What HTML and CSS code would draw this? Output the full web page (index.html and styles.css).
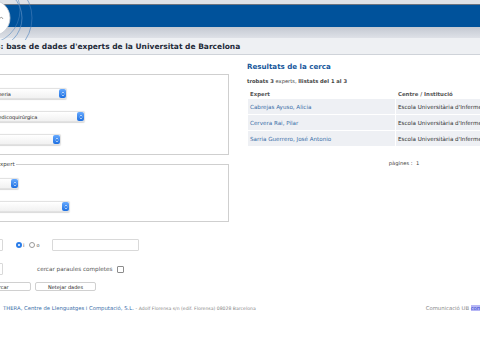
FILE: index.html
```html
<!DOCTYPE html>
<html lang="ca">
<head>
    <meta charset="UTF-8">
    <title>Experts UB</title>
    <link rel="stylesheet" href="styles.css">
</head>
<body>

<!-- capçalera -->
<div class="header">
    <div class="header-top"></div>
    <div class="header-blue"></div>
    <div class="header-band"></div>
    <svg class="logo" width="60" height="40" viewBox="0 0 60 40">
        <circle cx="-8" cy="18" r="30" fill="none" stroke="#5d8fc4" stroke-width="0.7"/>
        <circle cx="-8" cy="18" r="40" fill="none" stroke="#4a80ba" stroke-width="0.6"/>
        <circle cx="-14" cy="10" r="34" fill="none" stroke="#4c82bb" stroke-width="0.5"/>
        <circle cx="-8" cy="18" r="18" fill="#fff" stroke="#c3c8d0" stroke-width="0.8"/>
        <path d="M0 18 q2 -2 3 1" fill="none" stroke="#777" stroke-width="0.7"/>
    </svg>
</div>

<div class="page">
    <div class="titlebar">
        <h1>Experts UB: base de dades d'experts de la Universitat de Barcelona</h1>
    </div>

    <div class="main">
        <!-- formulari de cerca -->
        <div class="search">
            <fieldset class="box">
                <div class="field-row">
                    <label>Àmbit</label>
                    <span class="select sel-a"><span class="val">Infermeria</span><span class="arr"><svg width="4" height="6" viewBox="0 0 4 6"><path d="M0.8 2.3 L2 1 L3.2 2.3 M0.8 3.7 L2 5 L3.2 3.7" fill="none" stroke="#fff" stroke-width="0.6"/></svg></span></span>
                </div>
                <div class="field-row">
                    <label>Departament</label>
                    <span class="select sel-b"><span class="val">Inf. Medicoquirúrgica</span><span class="arr"><svg width="4" height="6" viewBox="0 0 4 6"><path d="M0.8 2.3 L2 1 L3.2 2.3 M0.8 3.7 L2 5 L3.2 3.7" fill="none" stroke="#fff" stroke-width="0.6"/></svg></span></span>
                </div>
                <div class="field-row">
                    <label>Especialitat</label>
                    <span class="select sel-c"><span class="val"></span><span class="arr"><svg width="4" height="6" viewBox="0 0 4 6"><path d="M0.8 2.3 L2 1 L3.2 2.3 M0.8 3.7 L2 5 L3.2 3.7" fill="none" stroke="#fff" stroke-width="0.6"/></svg></span></span>
                </div>
            </fieldset>

            <fieldset class="box box-expert">
                <legend>Dades de l'expert</legend>
                <div class="field-row">
                    <label>Sexe</label>
                    <span class="select sel-d"><span class="val"></span><span class="arr"><svg width="4" height="6" viewBox="0 0 4 6"><path d="M0.8 2.3 L2 1 L3.2 2.3 M0.8 3.7 L2 5 L3.2 3.7" fill="none" stroke="#fff" stroke-width="0.6"/></svg></span></span>
                </div>
                <div class="field-row">
                    <label>Idioma</label>
                    <span class="select sel-e"><span class="val"></span><span class="arr"><svg width="4" height="6" viewBox="0 0 4 6"><path d="M0.8 2.3 L2 1 L3.2 2.3 M0.8 3.7 L2 5 L3.2 3.7" fill="none" stroke="#fff" stroke-width="0.6"/></svg></span></span>
                </div>
            </fieldset>

            <div class="kw-row">
                <label>Paraules clau</label>
                <span class="input kw-1"></span>
                <span class="radio checked"></span><span class="opt">i</span>
                <span class="radio"></span><span class="opt">o</span>
                <span class="input kw-2"></span>
            </div>

            <div class="kw-row row-words">
                <label>Nom</label>
                <span class="input kw-1"></span>
                <span class="words">cercar paraules completes</span>
                <span class="checkbox"></span>
            </div>

            <div class="buttons">
                <button>Cercar</button>
                <button>Netejar dades</button>
            </div>
        </div>

        <!-- resultats -->
        <div class="results">
            <h2>Resultats de la cerca</h2>
            <p class="count"><b>trobats 3</b> experts, <b>llistats del 1 al 3</b></p>
            <table>
                <tr><th class="col-name">Expert</th><th>Centre / Institució</th></tr>
                <tr><td><a href="#">Cabrejas Ayuso, Alicia</a></td><td>Escola Universitària d'Infermeria</td></tr>
                <tr><td><a href="#">Cervera Rai, Pilar</a></td><td>Escola Universitària d'Infermeria</td></tr>
                <tr><td><a href="#">Sarria Guerrero, José Antonio</a></td><td>Escola Universitària d'Infermeria</td></tr>
            </table>
            <div class="pages">pàgines : &nbsp;1</div>
        </div>
    </div>

    <div class="footer">
        <div><a href="#">THERA, Centre de Llenguatges i Computació, S.L.</a> <span class="addr">- Adolf Florensa s/n (edif. Florensa) 08028 Barcelona</span></div>
        <div class="contact">Comunicació UB <a href="#" class="mail">comunicacio@ub.edu</a></div>
    </div>
</div>

</body>
</html>
```

FILE: styles.css
```css
body {
    margin: 0;
    overflow: hidden;
    background-color: #fff;
    font-family: "DejaVu Sans", Verdana, sans-serif;
    font-size: 5.5px;
    color: #333;
}

a {
    color: #3a6ea8;
    text-decoration: none;
}

/* capçalera */
.header {
    position: relative;
}

.header-top {
    height: 4px;
    background-color: #dfe2e7;
    border-bottom: 1px solid #6c7480;
}

.header-blue {
    height: 22px;
    background-color: #00529b;
}

.header-band {
    height: 11px;
    background: linear-gradient(#c4c9d2, #dee1e7);
}

.logo {
    position: absolute;
    left: 0;
    top: 0;
}

.page {
    width: 780px;
    margin-left: -120px;
}

.titlebar {
    height: 16px;
    background-color: #eef0f3;
    border-bottom: 1px solid #cfd3d9;
    display: flex;
    align-items: center;
}

.titlebar h1 {
    margin: 0;
    padding-left: 74px;
    font-size: 7.5px;
    color: #1e2a38;
    white-space: nowrap;
}

.main {
    display: grid;
    grid-template-columns: 349px 314px;
    column-gap: 18px;
}

/* formulari */
.search {
    padding-top: 19px;
}

.box {
    margin: 0;
    padding: 7px 8px 3px;
    border: 1px solid #cfcfcf;
}

.box-expert {
    margin-top: 6px;
    padding-top: 4px;
}

.box legend {
    margin-left: 76px;
    padding: 0 1px;
    font-size: 5.5px;
    line-height: 7px;
    color: #444;
}

.field-row {
    display: grid;
    grid-template-columns: 92px auto;
    align-items: center;
    height: 23px;
}

.field-row label {
    color: #444;
}

.select {
    display: flex;
    align-items: center;
    height: 9px;
    border: 1px solid #e2e2e2;
    border-radius: 2px;
    background: linear-gradient(#fff, #f1f1f1);
    box-shadow: 0 0.5px 1px rgba(0, 0, 0, 0.15);
    justify-self: start;
}

.select .val {
    flex: 1;
    padding-left: 3px;
    white-space: nowrap;
    overflow: hidden;
    color: #222;
    font-size: 5px;
}

.select .arr {
    width: 7px;
    height: 9px;
    border-radius: 2px;
    background: linear-gradient(#67aaff, #1d6fe0);
    display: flex;
    align-items: center;
    justify-content: center;
}

.sel-a { width: 84px; }
.sel-b { width: 102px; }
.sel-c { width: 78px; }
.sel-d { width: 36px; }
.sel-e { width: 87px; }

.kw-row {
    display: flex;
    align-items: center;
    margin-top: 17px;
}

.kw-row label {
    width: 60px;
    color: #444;
}

.input {
    height: 10px;
    border: 1px solid #d9d9d9;
    border-radius: 1px;
    background-color: #fff;
}

.kw-1 { width: 61px; }

.kw-2 {
    width: 85px;
    margin-left: 13px;
}

.radio {
    width: 6px;
    height: 6px;
    border: 0.7px solid #9a9a9a;
    border-radius: 50%;
    margin-left: 13px;
    background-color: #fff;
    box-sizing: border-box;
}

.radio.checked {
    border: 2px solid #2a7de9;
    background-color: #fff;
}

.radio + .opt + .radio {
    margin-left: 5px;
}

.opt {
    margin-left: 1px;
    font-size: 5px;
    color: #444;
}

.row-words {
    margin-top: 12px;
}

.words {
    margin-left: 34px;
    font-size: 5.7px;
    color: #555;
}

.checkbox {
    width: 5px;
    height: 5px;
    margin-left: 4px;
    border: 0.7px solid #8c8c8c;
    border-radius: 1px;
    background-color: #fff;
}

.buttons {
    display: flex;
    gap: 4px;
    margin-top: 7px;
    padding-left: 90px;
}

.buttons button {
    width: 61px;
    height: 9px;
    padding: 0;
    font-family: "DejaVu Sans", Verdana, sans-serif;
    font-size: 5px;
    color: #222;
    background-color: #fff;
    border: 1px solid #d0d0d0;
    border-radius: 2px;
}

/* resultats */
.results h2 {
    margin: 7px 0 0;
    font-size: 7.1px;
    color: #17589c;
}

.results .count {
    margin: 7px 0 0;
    font-size: 5.2px;
    color: #444;
}

.results table {
    width: 100%;
    margin-top: 5px;
    border-spacing: 1px;
    font-size: 5.6px;
}

.results th {
    text-align: left;
    height: 8px;
    padding: 0 2px;
    color: #555;
    font-size: 5.4px;
}

.results th.col-name {
    width: 143px;
}

.results td {
    height: 15px;
    padding: 0 1px 0 2px;
    background-color: #eef0f4;
    white-space: nowrap;
    color: #333;
}

.pages {
    margin-top: 13px;
    text-align: center;
    font-size: 5.2px;
    color: #444;
}

/* peu */
.footer {
    display: flex;
    gap: 170px;
    margin-top: 14px;
    padding-left: 123px;
    font-size: 5.3px;
    white-space: nowrap;
}

.footer .addr {
    font-size: 4.6px;
    color: #888;
}

.footer .contact {
    color: #888;
}

.footer .mail {
    background-color: #b7b7f5;
    color: #2a3fd0;
    text-decoration: underline;
}
```
